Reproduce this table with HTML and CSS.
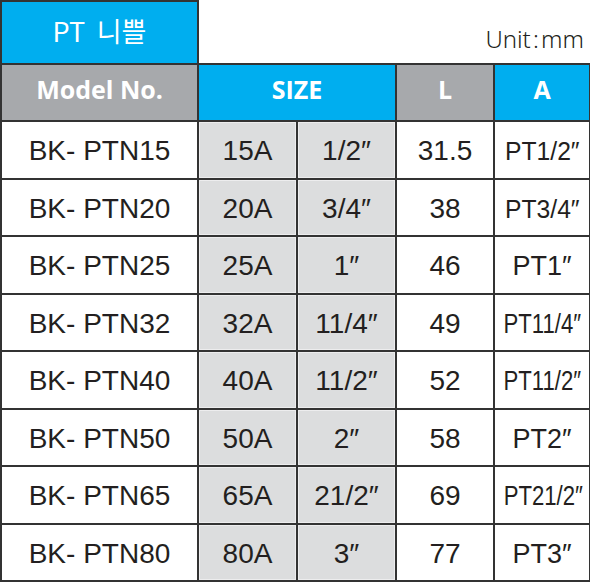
FILE: index.html
```html
<!DOCTYPE html>
<html lang="ko">
<head>
<meta charset="utf-8">
<title>PT 니쁠</title>
<link rel="stylesheet" href="styles.css">
</head>
<body>
<table class="spec">
  <colgroup>
    <col class="c-model"><col class="c-size"><col class="c-size"><col class="c-l"><col class="c-a">
  </colgroup>
  <tr class="title-row">
    <td class="title">PT 니쁠</td>
    <td class="unit" colspan="4">Unit : mm</td>
  </tr>
  <tr class="head-row">
    <th class="h-gray">Model No.</th>
    <th class="h-blue" colspan="2">SIZE</th>
    <th class="h-gray">L</th>
    <th class="h-blue">A</th>
  </tr>
  <tr><td class="model">BK- PTN15</td><td class="sz">15A</td><td class="sz">1/2″</td><td>31.5</td><td class="a"><span class="pt n2">PT1/2″</span></td></tr>
  <tr><td class="model">BK- PTN20</td><td class="sz">20A</td><td class="sz">3/4″</td><td>38</td><td class="a"><span class="pt n2">PT3/4″</span></td></tr>
  <tr><td class="model">BK- PTN25</td><td class="sz">25A</td><td class="sz">1″</td><td>46</td><td class="a"><span class="pt n1">PT1″</span></td></tr>
  <tr><td class="model">BK- PTN32</td><td class="sz">32A</td><td class="sz">11/4″</td><td>49</td><td class="a"><span class="pt n3">PT11/4″</span></td></tr>
  <tr><td class="model">BK- PTN40</td><td class="sz">40A</td><td class="sz">11/2″</td><td>52</td><td class="a"><span class="pt n3">PT11/2″</span></td></tr>
  <tr><td class="model">BK- PTN50</td><td class="sz">50A</td><td class="sz">2″</td><td>58</td><td class="a"><span class="pt n1">PT2″</span></td></tr>
  <tr><td class="model">BK- PTN65</td><td class="sz">65A</td><td class="sz">21/2″</td><td>69</td><td class="a"><span class="pt n3">PT21/2″</span></td></tr>
  <tr><td class="model">BK- PTN80</td><td class="sz">80A</td><td class="sz">3″</td><td>77</td><td class="a"><span class="pt n1">PT3″</span></td></tr>
</table>
</body>
</html>
```
FILE: styles.css
```css
html, body {
  margin: 0;
  padding: 0;
  background: #ffffff;
}

.spec {
  border-collapse: collapse;
  table-layout: fixed;
  width: 590px;
  font-family: "Liberation Sans", Arial, sans-serif;
  color: #231f20;
}

.c-model { width: 197px; }
.c-size { width: 99px; }
.c-l { width: 98px; }
.c-a { width: 96px; }

.spec tr { height: 57.5px; }
.spec tr.title-row { height: 63px; }
.spec tr.head-row { height: 57px; }

.spec td, .spec th {
  border: 2px solid #333333;
  padding: 0;
  text-align: center;
  vertical-align: middle;
  font-size: 28px;
  font-weight: 400;
  line-height: 1;
  white-space: nowrap;
}

.spec td {
  padding-top: 3px;
}

.spec td.title {
  background: #00aeef;
  color: #ffffff;
  font-family: "Noto Sans CJK KR", "Noto Sans", sans-serif;
  font-weight: 400;
  font-size: 27px;
  word-spacing: 4px;
  padding: 0 0 4px 0;
}

.spec td.unit {
  border-top: none;
  border-right: none;
  text-align: right;
  vertical-align: bottom;
  font-family: "Noto Sans", "Open Sans", sans-serif;
  font-weight: 300;
  font-size: 24px;
  word-spacing: -4px;
  padding: 0 6px 12px 0;
  color: #231f20;
}

.head-row th {
  color: #ffffff;
  font-family: "Open Sans", "Noto Sans", sans-serif;
  font-weight: 700;
  font-size: 25px;
  padding-bottom: 6px;
}

.h-gray { background: #a7a9ac; }
.h-blue { background: #00aeef; }

.spec td.sz {
  background: #dcddde;
  box-shadow: inset 0 0 0 1px #ededee;
}

.pt {
  display: inline-block;
  transform-origin: center center;
}

.pt.n1 { font-size: 27px; }
.pt.n2 { font-size: 26px; transform: scaleX(0.95); }
.pt.n3 { font-size: 27px; transform: scaleX(0.82); }
```
